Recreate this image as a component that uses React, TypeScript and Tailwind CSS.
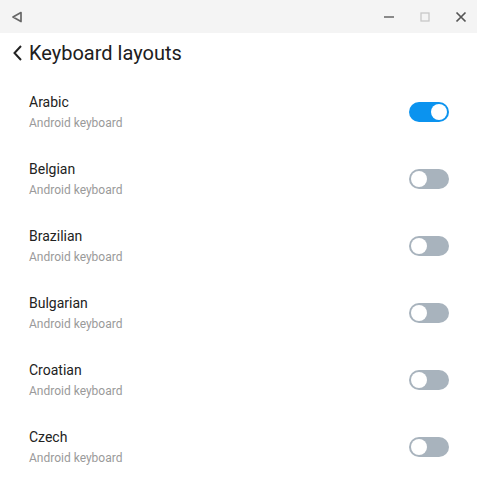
import React from 'react';

const layouts = [
  { name: 'Arabic', on: true },
  { name: 'Belgian', on: false },
  { name: 'Brazilian', on: false },
  { name: 'Bulgarian', on: false },
  { name: 'Croatian', on: false },
  { name: 'Czech', on: false },
];

const Toggle: React.FC<{ on: boolean }> = ({ on }) => (
  <div
    className={`w-[40px] h-[20px] rounded-full flex items-center px-[2px] ${
      on ? 'bg-[#0b93ef] justify-end' : 'bg-[#a8b3bd] justify-start'
    }`}
  >
    <div className="w-[16px] h-[16px] rounded-full bg-white" />
  </div>
);

export default function App() {
  return (
    <div className="w-[477px] h-[483px] bg-white overflow-hidden font-['Roboto',sans-serif]">
      {/* window bar */}
      <div className="h-[33px] bg-[#f4f4f4] flex items-center pl-[11px] pr-[10px]">
        <svg width="12" height="12" viewBox="0 0 12 12" className="text-[#666]">
          <path d="M10 1.5 L2 6 L10 10.5 Z" fill="none" stroke="currentColor" strokeWidth="1.7" strokeLinejoin="round" />
        </svg>
        <div className="ml-auto flex items-center gap-[24px]">
          <svg width="12" height="12" viewBox="0 0 12 12">
            <path d="M1 6 H11" stroke="#666" strokeWidth="1.5" />
          </svg>
          <svg width="12" height="12" viewBox="0 0 12 12">
            <rect x="2" y="2" width="8" height="8" fill="none" stroke="#c8c8c8" strokeWidth="1.3" />
          </svg>
          <svg width="12" height="12" viewBox="0 0 12 12">
            <path d="M1.5 1.5 L10.5 10.5 M10.5 1.5 L1.5 10.5" stroke="#555" strokeWidth="1.7" />
          </svg>
        </div>
      </div>

      {/* header */}
      <div className="h-[45px] flex items-start pt-[9px] pl-[12px]">
        <svg width="12" height="20" viewBox="0 0 12 20" className="mt-[1px]">
          <path d="M9 3 L2.5 10 L9 17" fill="none" stroke="#222" strokeWidth="2" />
        </svg>
        <span className="ml-[5px] text-[20px] leading-[22px] text-[#202020]">Keyboard layouts</span>
      </div>

      {/* list */}
      <div className="flex flex-col">
        {layouts.map((l) => (
          <div key={l.name} className="h-[67px] flex items-center pl-[29px] pr-[28px]">
            <div className="flex flex-col gap-[3px]">
              <span className="text-[14px] leading-[20px] text-[#222]">{l.name}</span>
              <span className="text-[12px] leading-[16px] text-[#9a9a9a]">Android keyboard</span>
            </div>
            <div className="ml-auto mt-[1px]">
              <Toggle on={l.on} />
            </div>
          </div>
        ))}
      </div>
    </div>
  );
}
